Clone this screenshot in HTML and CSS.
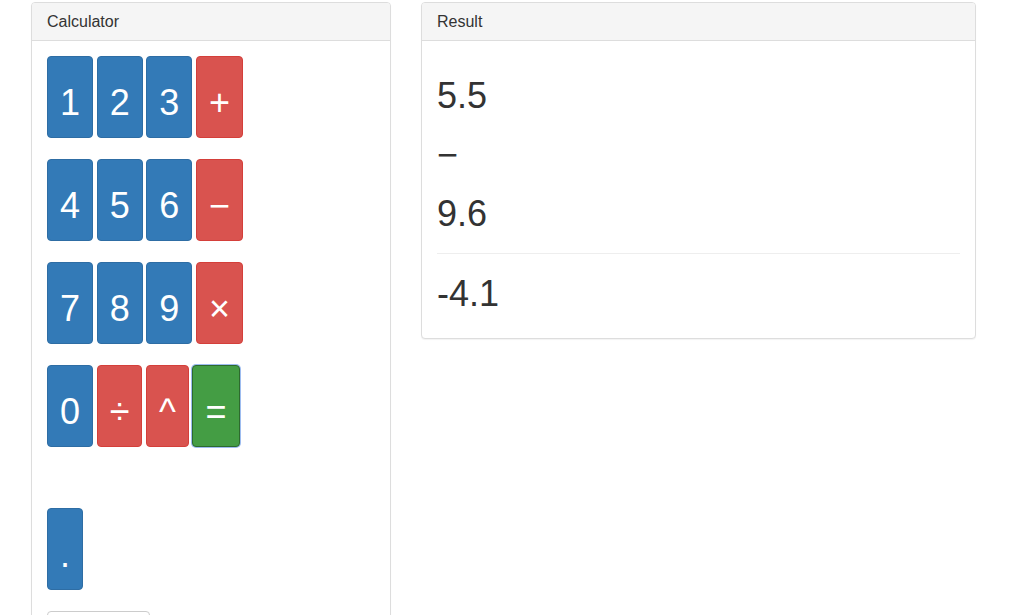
FILE: index.html
```html
<!DOCTYPE html>
<html lang="en">
<head>
  <meta charset="UTF-8">
  <meta name="viewport" content="width=device-width, initial-scale=1.0">
  <title>Calculator</title>
  <link rel="stylesheet" href="styles.css">
</head>
<body>
  <div class="page">
    <div class="panel calc-panel">
      <div class="panel-heading">
        <h3 class="panel-title">Calculator</h3>
      </div>
      <div class="panel-body">
        <div class="key-row">
          <button class="btn btn-primary">1</button>
          <button class="btn btn-primary">2</button>
          <button class="btn btn-primary">3</button>
          <button class="btn btn-danger">+</button>
        </div>
        <div class="key-row">
          <button class="btn btn-primary">4</button>
          <button class="btn btn-primary">5</button>
          <button class="btn btn-primary">6</button>
          <button class="btn btn-danger">&minus;</button>
        </div>
        <div class="key-row">
          <button class="btn btn-primary">7</button>
          <button class="btn btn-primary">8</button>
          <button class="btn btn-primary">9</button>
          <button class="btn btn-danger">&times;</button>
        </div>
        <div class="key-row">
          <button class="btn btn-primary">0</button>
          <button class="btn btn-danger">&divide;</button>
          <button class="btn btn-danger">^</button>
          <button class="btn btn-success is-focused">=</button>
        </div>
        <div class="key-row spaced">
          <button class="btn btn-primary">.</button>
        </div>
        <div class="key-row">
          <button class="btn btn-default">Clear</button>
        </div>
      </div>
    </div>

    <div class="panel result-panel">
      <div class="panel-heading">
        <h3 class="panel-title">Result</h3>
      </div>
      <div class="panel-body">
        <h1 class="result-line">5.5</h1>
        <h1 class="result-line">&minus;</h1>
        <h1 class="result-line">9.6</h1>
        <hr class="divider">
        <h1 class="result-line">-4.1</h1>
      </div>
    </div>
  </div>
</body>
</html>
```

FILE: styles.css
```css
html {
  overflow: hidden;
}

body {
  font-family: "Liberation Sans", Arial, sans-serif;
  font-size: 14px;
  line-height: 1.42857;
  margin: 0;
  padding: 0;
  background-color: #fff;
  color: #333;
}

.page {
  display: flex;
  align-items: flex-start;
  gap: 30px;
  padding: 2px 0 0 31px;
}

/* Panels */
.panel {
  background: #fff;
  border: 1px solid #ddd;
  border-radius: 4px;
  box-shadow: 0 1px 1px rgba(0, 0, 0, 0.05);
  box-sizing: border-box;
}

.calc-panel {
  width: 360px;
}

.result-panel {
  width: 555px;
}

.panel-heading {
  background: #f5f5f5;
  border-bottom: 1px solid #ddd;
  border-radius: 3px 3px 0 0;
  padding: 10px 15px;
}

.panel-title {
  margin: 0;
  font-size: 16px;
  font-weight: normal;
  line-height: 17px;
  color: #333;
}

.panel-body {
  padding: 15px;
}

/* Keys */
.key-row {
  display: flex;
  gap: 3.6px;
  margin-bottom: 21px;
}

.key-row.spaced {
  margin-top: 61px;
}

.btn {
  font-family: inherit;
  font-size: 36px;
  line-height: 51px;
  padding: 20px 12px 9px;
  border: 1px solid transparent;
  border-radius: 4px;
  color: #fff;
  cursor: pointer;
}

.btn-primary {
  background: #337ab7;
  border-color: #2e6da4;
}

.btn-danger {
  background: #d9534f;
  border-color: #d43f3a;
}

.btn-success {
  background: #449d44;
  border-color: #2d6a2d;
}

.is-focused {
  box-shadow: 0 0 0 1px #9dbcf0;
}

.btn-default {
  width: 103px;
  background: #fff;
  border-color: #ccc;
  color: #333;
  font-size: 14px;
  line-height: 20px;
  padding: 12px 12px 6px;
}

/* Result */
.result-line {
  font-size: 36px;
  font-weight: normal;
  line-height: 39px;
  margin: 20px 0 10px;
  color: #333;
}

.divider {
  border: 0;
  border-top: 1px solid #eee;
  margin: 20px 0;
}
```
